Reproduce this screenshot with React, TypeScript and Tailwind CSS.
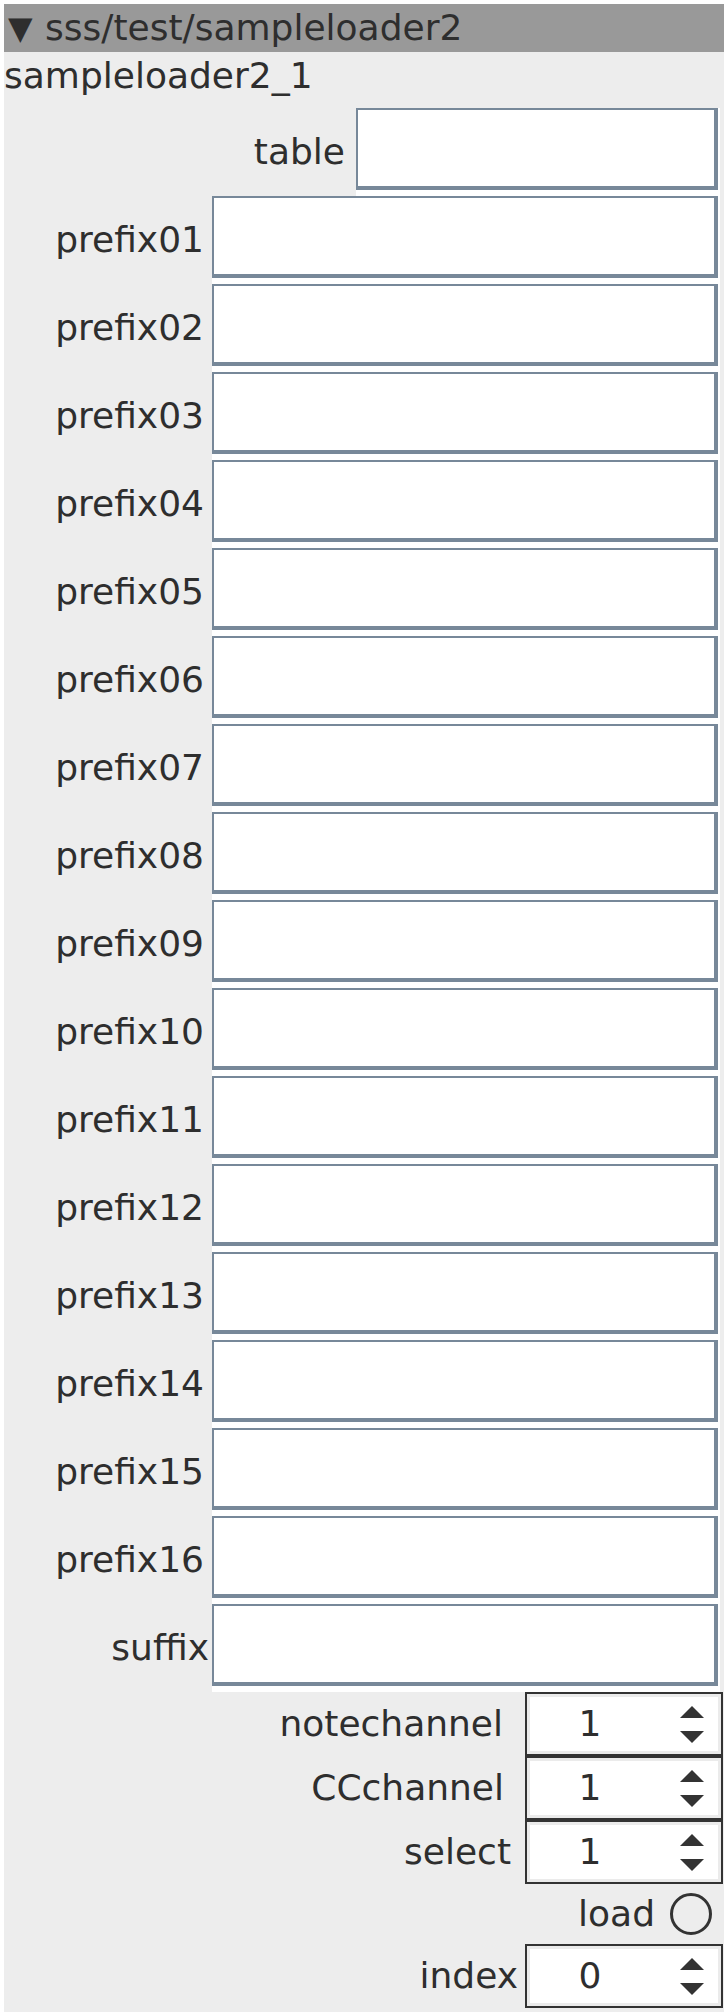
import React from "react";

const prefixes = Array.from({ length: 16 }, (_, i) => "prefix" + String(i + 1).padStart(2, "0"));

// text entry row: label on the left, sunken white box on the right
function EntryRow({ label, boxWidth, labelPad }: { label: string; boxWidth: string; labelPad: string }) {
    return (
        <div className="flex h-[88px] items-center pr-[4px]">
            <div className={"flex-1 text-right " + labelPad}>{label}</div>
            <div className={"h-full bg-white pr-[2px] pb-[6px] " + boxWidth}>
                <div className="h-full border-l-2 border-t-2 border-r-4 border-b-4 border-[#778899]" />
            </div>
        </div>
    );
}

function Arrows() {
    return (
        <svg width="24" height="37" viewBox="0 0 24 37" className="block">
            <polygon points="12,0 24,12 0,12" fill="#333333" />
            <polygon points="0,25 24,25 12,37" fill="#333333" />
        </svg>
    );
}

function SpinRow({ label, value, gap }: { label: string; value: string; gap: string }) {
    return (
        <div className="flex h-[64px] items-center justify-end pr-[1px]">
            <span className={gap}>{label}</span>
            <div className="h-full w-[198px] border-2 border-[#333333]">
                <div className="flex h-full items-center border-[3px] border-[#ebebeb] bg-white">
                    <div className="flex-1 pr-[16px] text-center">{value}</div>
                    <div className="flex w-[52px] items-center justify-center">
                        <Arrows />
                    </div>
                </div>
            </div>
        </div>
    );
}

export default function App() {
    return (
        <div className="bg-white p-[4px] font-['DejaVu_Sans',sans-serif] text-[36px] leading-none text-[#2e2e2e]">
            <div className="bg-[#ededed] pb-[4px]">
                <header className="flex h-[48px] items-center bg-[#999999] pl-[4px]">
                    <span className="w-[37px] text-[32px]">▼</span>
                    <span>sss/test/sampleloader2</span>
                </header>
                <div className="flex h-[48px] items-center">sampleloader2_1</div>
                <div className="h-[8px]" />

                <EntryRow label="table" boxWidth="w-[364px]" labelPad="pr-[11px]" />
                {prefixes.map((p) => (
                    <EntryRow key={p} label={p} boxWidth="w-[508px]" labelPad="pr-[8px]" />
                ))}
                <EntryRow label="suffix" boxWidth="w-[508px]" labelPad="pr-[3px]" />

                <SpinRow label="notechannel" value="1" gap="mr-[22px]" />
                <SpinRow label="CCchannel" value="1" gap="mr-[21px]" />
                <SpinRow label="select" value="1" gap="mr-[14px]" />

                <div className="flex h-[60px] items-center justify-end pr-[12px]">
                    <span className="mr-[15px]">load</span>
                    <div className="h-[42px] w-[42px] rounded-full border-[3px] border-[#333333]" />
                </div>

                <SpinRow label="index" value="0" gap="mr-[7px]" />
            </div>
        </div>
    );
}
